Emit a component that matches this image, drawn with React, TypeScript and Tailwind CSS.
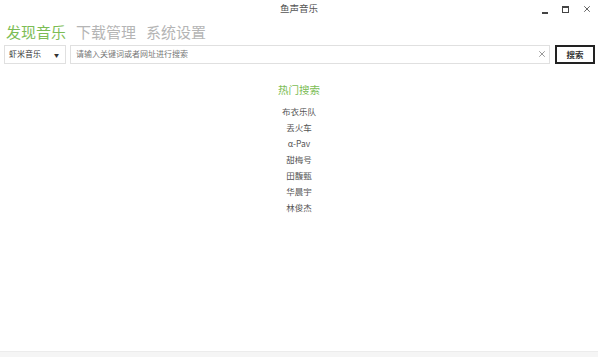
import { X } from "lucide-react";

const hot = ["布衣乐队", "丢火车", "α-Pav", "甜梅号", "田馥甄", "华晨宇", "林俊杰"];

export default function App() {
  return (
    <div
      className="flex flex-col w-[598px] h-[357px] bg-white text-[#333] overflow-hidden"
      style={{ fontFamily: '"Noto Sans CJK SC", "Liberation Sans", sans-serif' }}
    >
      <header className="relative h-[18px] flex items-center justify-center">
        <span className="text-[9.5px] leading-none text-[#555]">鱼声音乐</span>
        <div className="absolute right-0 top-0 h-[18px] flex items-center pr-[1px]">
          <div className="w-[21px] flex justify-center items-end h-[10px]">
            <div className="w-[6px] h-[2px] bg-[#444]" />
          </div>
          <div className="w-[21px] flex justify-center">
            <div className="w-[7px] h-[7px] border border-[#444] border-t-2" />
          </div>
          <div className="w-[21px] flex justify-center">
            <X size={10} strokeWidth={2} className="text-[#444]" />
          </div>
        </div>
      </header>

      <nav className="flex items-center gap-[10px] pl-[6px] h-[25px] mt-[1px]">
        <span className="text-[15px] leading-none text-[#7cbd55]">发现音乐</span>
        <span className="text-[15px] leading-none text-[#b5b5b5]">下载管理</span>
        <span className="text-[15px] leading-none text-[#b5b5b5]">系统设置</span>
      </nav>

      <div className="flex items-center pl-[4px] pr-[3px] gap-[4px] h-[20px]">
        <div className="w-[62px] h-[19px] border border-[#e0e0e0] flex items-center justify-between pl-[4px] pr-[6px]">
          <span className="text-[8px] leading-none">虾米音乐</span>
          <span className="text-[5px] leading-none text-[#333]">▼</span>
        </div>
        <div className="flex-1 h-[19px] border border-[#e0e0e0] flex items-center justify-between pl-[5px] pr-[2px]">
          <span className="text-[8px] leading-none text-[#777]">请输入关键词或者网址进行搜索</span>
          <X size={10} strokeWidth={1.6} className="text-[#666]" />
        </div>
        <button className="w-[40px] h-[19px] ml-[1px] border-2 border-[#222] flex items-center justify-center text-[8.5px] font-bold leading-none">
          搜索
        </button>
      </div>

      <main className="flex-1 flex flex-col items-center pt-[20px]">
        <div className="text-[10.5px] leading-[11px] text-[#7cbd55] mb-[8px]">热门搜索</div>
        <ul className="flex flex-col items-center">
          {hot.map((h) => (
            <li key={h} className="text-[8.5px] leading-[16px] text-[#555]">
              {h}
            </li>
          ))}
        </ul>
      </main>

      <footer className="h-[6px] bg-[#f5f5f5] border-t border-[#ececec]" />
    </div>
  );
}
